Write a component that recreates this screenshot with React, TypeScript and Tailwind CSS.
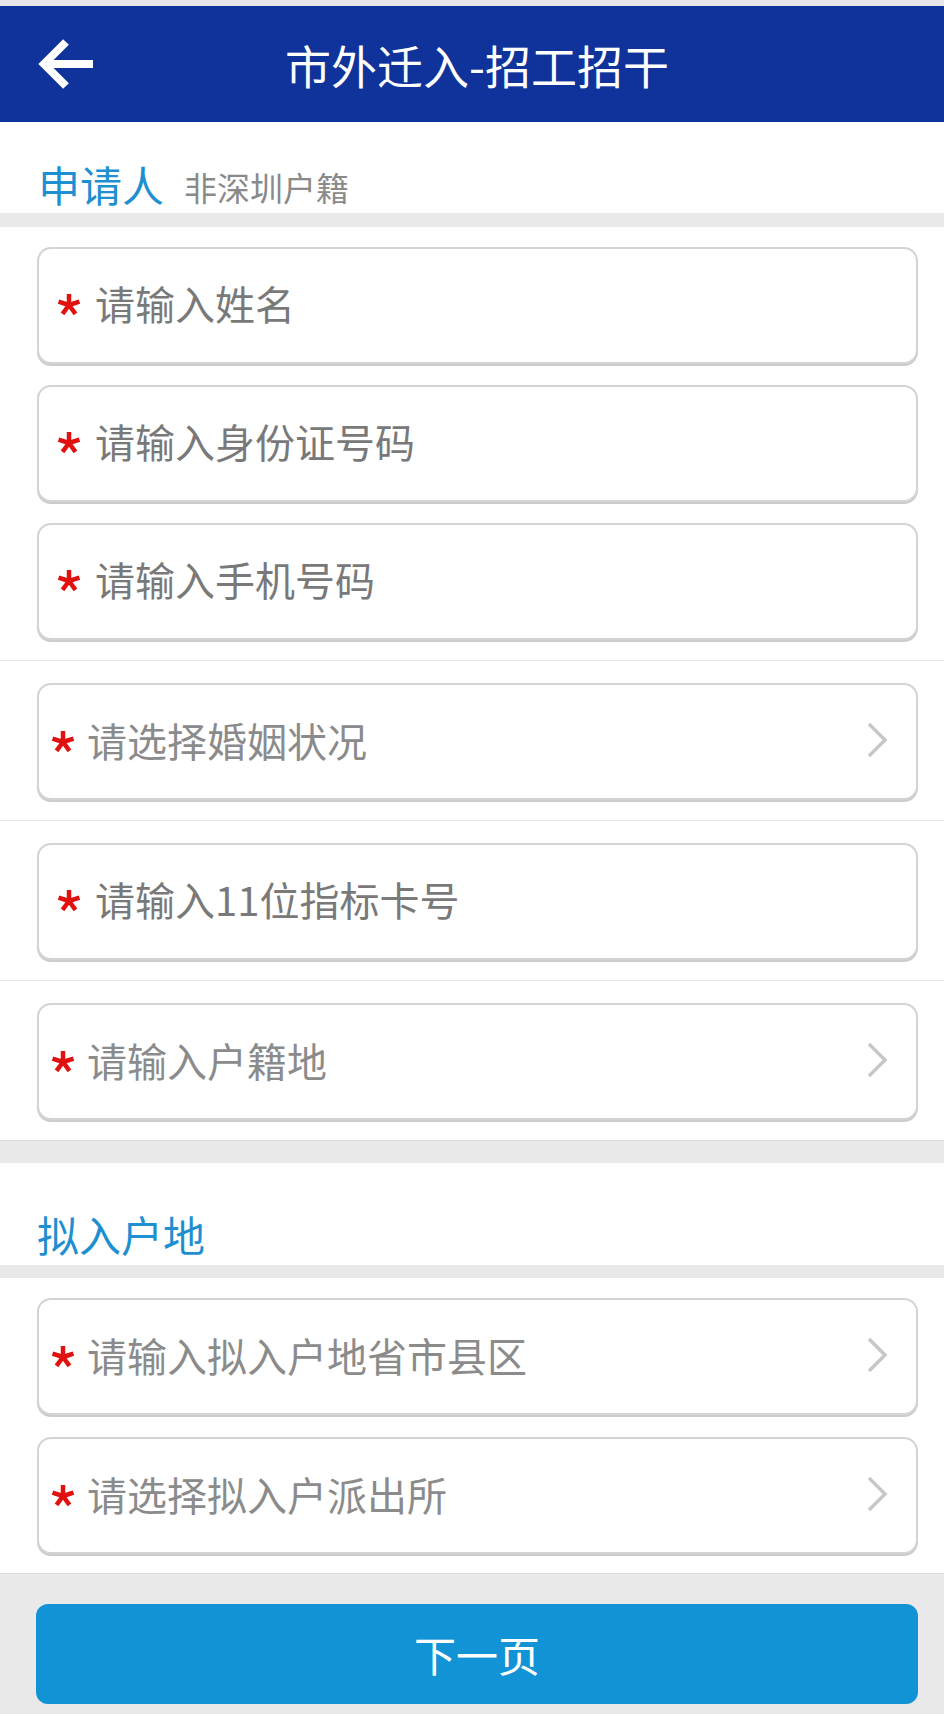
// 市外迁入 — 申请人信息表单
const FONT = "font-['Noto_Sans_CJK_SC','Noto_Sans',sans-serif]";

function Star() {
  const arms = [-90, -18, 54, 126, 198];
  return (
    <svg width="24" height="24" viewBox="0 0 24 24" className="shrink-0 translate-y-[2px]">
      {arms.map((a) => {
        const r = (a * Math.PI) / 180;
        return (
          <line
            key={a}
            x1="12"
            y1="12"
            x2={12 + Math.cos(r) * 11}
            y2={12 + Math.sin(r) * 11}
            stroke="#e0110f"
            strokeWidth="4.5"
          />
        );
      })}
    </svg>
  );
}

function Chevron() {
  return (
    <svg width="22" height="36" viewBox="0 0 22 36" className="shrink-0">
      <polyline points="3,2 19,18 3,34" fill="none" stroke="#c7c7c7" strokeWidth="3.5" />
    </svg>
  );
}

function Field({ label, select = false }: { label: string; select?: boolean }) {
  return (
    <div className="flex h-[117px] items-center rounded-[14px] border-2 border-[#d4d4d4] shadow-[0_2px_0_#cccccc] bg-white">
      {select ? (
        <div className="flex flex-1 items-center pb-[4px] pl-[12px] pr-[28px]">
          <Star />
          <span className="ml-[12px] flex-1 text-[40px] leading-none text-[#8b8b8b]">{label}</span>
          <Chevron />
        </div>
      ) : (
        <div className="flex flex-1 items-center pb-[6px] pl-[18px]">
          <Star />
          <span className="ml-[14px] text-[40px] leading-none text-[#797979]">{label}</span>
        </div>
      )}
    </div>
  );
}

function Row({ label, select }: { label: string; select?: boolean }) {
  return (
    <div className="border-t border-[#e4e4e4] pl-[37px] pr-[26px] pt-[22px] pb-[20px]">
      <Field label={label} select={select} />
    </div>
  );
}

export default function App() {
  return (
    <div className={`flex min-h-[1714px] w-[944px] flex-col bg-white ${FONT}`}>
      <div className="h-[6px] bg-[#e6e6e6]" />

      {/* 顶部栏 */}
      <header className="grid h-[116px] grid-cols-[1fr_auto_1fr] items-center bg-[#0f339a]">
        <div className="pl-[34px]">
          <svg width="64" height="56" viewBox="0 0 64 56">
            <path d="M59 28H10M32 6L10 28L32 50" fill="none" stroke="white" strokeWidth="8" />
          </svg>
        </div>
        <h1 className="pl-[10px] text-[46px] leading-none text-white">市外迁入-招工招干</h1>
        <div />
      </header>

      {/* 申请人 */}
      <div className="flex h-[91px] items-end px-[38px] pb-[8px]">
        <span className="text-[42px] leading-none text-[#1e8fd0]">申请人</span>
        <span className="ml-[20px] pb-[1px] text-[33px] leading-none text-[#8a8a8a]">非深圳户籍</span>
      </div>
      <div className="h-[14px] bg-[#e9e9e9]" />

      <div className="flex flex-col gap-[21px] pl-[37px] pr-[26px] pt-[20px] pb-[20px]">
        <Field label="请输入姓名" />
        <Field label="请输入身份证号码" />
        <Field label="请输入手机号码" />
      </div>
      <Row label="请选择婚姻状况" select />
      <Row label="请输入11位指标卡号" />
      <Row label="请输入户籍地" select />

      <div className="h-[23px] border-t border-[#dcdcdc] bg-[#e9e9e9]" />

      {/* 拟入户地 */}
      <div className="flex h-[102px] items-end px-[37px] pb-[10px]">
        <span className="text-[42px] leading-none text-[#1e8fd0]">拟入户地</span>
      </div>
      <div className="h-[13px] bg-[#e9e9e9]" />

      <div className="flex flex-col gap-[22px] pl-[37px] pr-[26px] pt-[20px] pb-[19px]">
        <Field label="请输入拟入户地省市县区" select />
        <Field label="请选择拟入户派出所" select />
      </div>

      {/* 底部按钮 */}
      <div className="flex flex-1 flex-col border-t border-[#dcdcdc] bg-[#e9e9e9] pl-[36px] pr-[26px] pt-[30px] pb-[9px]">
        <button
          type="button"
          className="flex h-[100px] items-center justify-center rounded-[12px] bg-[#1193d5] text-[42px] leading-none text-white"
        >
          下一页
        </button>
      </div>
    </div>
  );
}
